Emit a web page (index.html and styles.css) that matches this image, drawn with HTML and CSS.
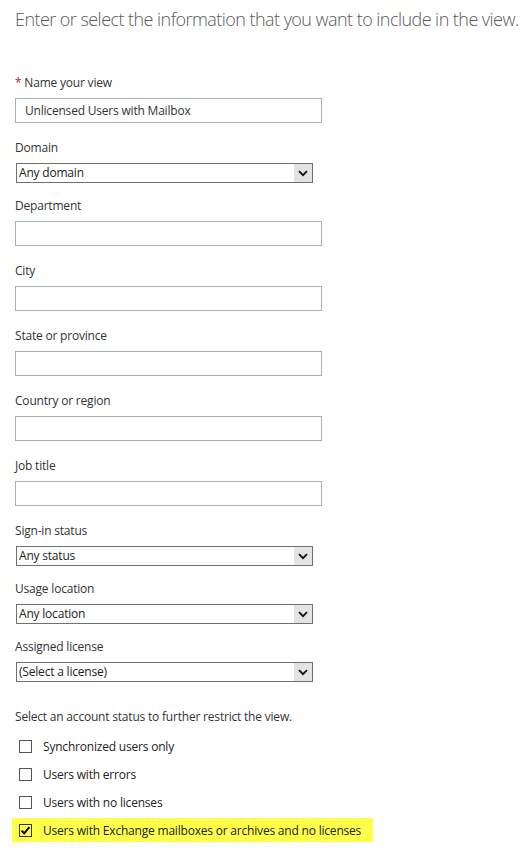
FILE: index.html
```html
<!DOCTYPE html>
<html lang="en">
<head>
<meta charset="utf-8">
<title>View</title>
<link rel="stylesheet" href="styles.css">
</head>
<body>
<div class="page">
  <h1 class="title">Enter or select the information that you want to include in the view.</h1>

  <div class="field field-first">
    <div class="label"><span class="req">*</span> Name your view</div>
    <div class="textbox">Unlicensed Users with Mailbox</div>
  </div>

  <div class="field sel">
    <div class="label">Domain</div>
    <div class="select"><span class="sel-text">Any domain</span><span class="sel-btn"><svg width="10" height="7" viewBox="0 0 10 7"><path d="M1 1.2 L5 5.2 L9 1.2" fill="none" stroke="#111" stroke-width="1.8"/></svg></span></div>
  </div>

  <div class="field">
    <div class="label">Department</div>
    <div class="textbox"></div>
  </div>

  <div class="field">
    <div class="label">City</div>
    <div class="textbox"></div>
  </div>

  <div class="field">
    <div class="label">State or province</div>
    <div class="textbox"></div>
  </div>

  <div class="field">
    <div class="label">Country or region</div>
    <div class="textbox"></div>
  </div>

  <div class="field">
    <div class="label">Job title</div>
    <div class="textbox"></div>
  </div>

  <div class="field sel">
    <div class="label">Sign-in status</div>
    <div class="select"><span class="sel-text">Any status</span><span class="sel-btn"><svg width="10" height="7" viewBox="0 0 10 7"><path d="M1 1.2 L5 5.2 L9 1.2" fill="none" stroke="#111" stroke-width="1.8"/></svg></span></div>
  </div>

  <div class="field sel">
    <div class="label">Usage location</div>
    <div class="select"><span class="sel-text">Any location</span><span class="sel-btn"><svg width="10" height="7" viewBox="0 0 10 7"><path d="M1 1.2 L5 5.2 L9 1.2" fill="none" stroke="#111" stroke-width="1.8"/></svg></span></div>
  </div>

  <div class="field sel last">
    <div class="label">Assigned license</div>
    <div class="select"><span class="sel-text">(Select a license)</span><span class="sel-btn"><svg width="10" height="7" viewBox="0 0 10 7"><path d="M1 1.2 L5 5.2 L9 1.2" fill="none" stroke="#111" stroke-width="1.8"/></svg></span></div>
  </div>

  <div class="label status-intro">Select an account status to further restrict the view.</div>

  <div class="checks">
    <div class="check-row"><span class="box"></span><span class="check-label">Synchronized users only</span></div>
    <div class="check-row"><span class="box"></span><span class="check-label">Users with errors</span></div>
    <div class="check-row"><span class="box"></span><span class="check-label">Users with no licenses</span></div>
    <div class="check-row highlighted"><span class="box checked"><svg width="11" height="11" viewBox="0 0 11 11"><path d="M1.6 5.6 L4.2 8.3 L9.4 2.2" fill="none" stroke="#000" stroke-width="2"/></svg></span><span class="check-label">Users with Exchange mailboxes or archives and no licenses</span></div>
  </div>
</div>
</body>
</html>
```

FILE: styles.css
```css
html, body {
  margin: 0;
  padding: 0;
  background: #ffffff;
}

.page {
  padding: 0 0 0 15px;
  font-family: "Open Sans", "Noto Sans", "Liberation Sans", sans-serif;
  font-size: 12px;
  letter-spacing: -0.2px;
  color: #333333;
}

.title {
  margin: 0;
  padding-top: 6px;
  font-family: "Open Sans", "Noto Sans", sans-serif;
  font-weight: 300;
  font-size: 18px;
  line-height: 26px;
  color: #595959;
  white-space: nowrap;
  letter-spacing: -0.55px;
}

.field-first {
  margin-top: 43px;
}

.label {
  height: 16px;
  line-height: 16px;
  white-space: nowrap;
}

.req {
  color: #a4262c;
}

.field .label {
  margin-bottom: 7px;
}

.field {
  margin-bottom: 17px;
}

.field.sel {
  margin-bottom: 15px;
}

.field.sel.last {
  margin-bottom: 27px;
}

.textbox {
  box-sizing: border-box;
  width: 307px;
  height: 25px;
  border: 1px solid #a6b2b2;
  padding: 0 9px;
  line-height: 23px;
  color: #333333;
}

.select {
  box-sizing: border-box;
  width: 297px;
  height: 20px;
  border: 1px solid #707070;
  display: flex;
  align-items: stretch;
  margin-left: 1px;
}

.sel-text {
  flex: 1;
  padding-left: 2px;
  line-height: 18px;
  color: #222222;
  white-space: nowrap;
}

.sel-btn {
  width: 18px;
  background: #e3e3e3;
  border-left: 1px solid #ffffff;
  display: flex;
  align-items: center;
  justify-content: center;
}

.status-intro {
  margin-bottom: 7px;
}

.checks {
  display: flex;
  flex-direction: column;
}

.check-row {
  display: flex;
  align-items: center;
  height: 28px;
  margin-left: -3px;
  padding-left: 7px;
  width: 361px;
  box-sizing: border-box;
}

.check-row.highlighted {
  background: #ffff4a;
  height: 24px;
  margin-top: 2px;
}

.box {
  box-sizing: border-box;
  width: 13px;
  height: 13px;
  border: 1px solid #555555;
  background: #ffffff;
  margin-right: 11px;
  display: flex;
  align-items: center;
  justify-content: center;
}

.box.checked {
  background: transparent;
  border-color: #333333;
}

.check-label {
  white-space: nowrap;
  color: #222222;
}
```
